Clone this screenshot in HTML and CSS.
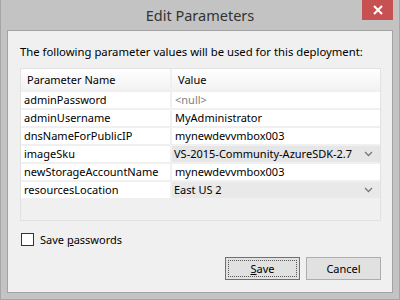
FILE: index.html
```html
<!DOCTYPE html>
<html lang="en">
<head>
    <meta charset="UTF-8">
    <title>Edit Parameters</title>
    <link rel="stylesheet" href="styles.css">
</head>
<body>
    <div class="window">
        <div class="titlebar">
            <div class="title">Edit Parameters</div>
            <button class="close-button">
                <svg width="10" height="10" viewBox="0 0 10 10"><path d="M1 1L9 9M9 1L1 9" stroke="#fff" stroke-width="2"/></svg>
            </button>
        </div>
        <div class="client">
            <p class="intro">The following parameter values will be used for this deployment:</p>
            <div class="grid">
                <div class="head">Parameter Name</div>
                <div class="head">Value</div>

                <div class="cell">adminPassword</div>
                <div class="cell null">&lt;null&gt;</div>

                <div class="cell">adminUsername</div>
                <div class="cell">MyAdministrator</div>

                <div class="cell">dnsNameForPublicIP</div>
                <div class="cell">mynewdevvmbox003</div>

                <div class="cell">imageSku</div>
                <div class="cell combo">
                    <span class="combo-text">VS-2015-Community-AzureSDK-2.7</span>
                    <svg class="chevron" width="9" height="6" viewBox="0 0 9 6"><path d="M1 1L4.5 4.5L8 1" fill="none" stroke="#777" stroke-width="1.3"/></svg>
                </div>

                <div class="cell">newStorageAccountName</div>
                <div class="cell">mynewdevvmbox003</div>

                <div class="cell">resourcesLocation</div>
                <div class="cell combo plain">
                    <span class="combo-text">East US 2</span>
                    <svg class="chevron" width="9" height="6" viewBox="0 0 9 6"><path d="M1 1L4.5 4.5L8 1" fill="none" stroke="#777" stroke-width="1.3"/></svg>
                </div>
            </div>
            <label class="save-row">
                <span class="checkbox"></span>
                <span>Save <u>p</u>asswords</span>
            </label>
            <div class="buttons">
                <button class="btn default"><span class="focus"><u>S</u>ave</span></button>
                <button class="btn">Cancel</button>
            </div>
        </div>
    </div>
</body>
</html>
```

FILE: styles.css
```css
body {
    margin: 0;
    font-family: "Noto Sans", "Open Sans", sans-serif;
    font-size: 11px;
    color: #000;
}
.window {
    width: 400px;
    height: 300px;
    box-sizing: border-box;
    background: #c3c3c3;
    border: 1px solid #a6a6a6;
    border-top: none;
    display: flex;
    flex-direction: column;
}
.titlebar {
    height: 30px;
    display: flex;
    align-items: flex-start;
}
.title {
    flex: 1;
    padding-left: 37px;
    text-align: center;
    font-size: 14.5px;
    line-height: 30px;
    color: #333;
}
.close-button {
    width: 31px;
    height: 20px;
    margin-right: 6px;
    border: none;
    padding: 0;
    background: #c75050;
    display: flex;
    justify-content: center;
    align-items: center;
}
.client {
    flex: 1;
    margin: 0 6px 6px 6px;
    border: 1px solid #a3a3a3;
    background: #f0f0f0;
    padding: 0 11px 0 12px;
    display: flex;
    flex-direction: column;
}
.intro {
    margin: 13px 0 0 0;
    line-height: 16px;
    font-size: 11.3px;
}
.grid {
    margin-top: 8px;
    height: 153px;
    box-sizing: border-box;
    border: 1px solid #e2e2e2;
    background: #f0f0f0;
    display: grid;
    grid-template-columns: 149px 1fr;
    grid-template-rows: 21px;
    grid-auto-rows: 16px;
    column-gap: 2px;
    row-gap: 2px;
    align-content: start;
}
.head {
    background: linear-gradient(#fff, #f2f2f2);
    padding-left: 6px;
    line-height: 21px;
}
.cell {
    background: #fff;
    padding-left: 3px;
    line-height: 16px;
    white-space: nowrap;
    overflow: hidden;
}
.null {
    color: #808080;
}
.combo {
    background: #e6e6e6;
    display: flex;
    align-items: center;
    padding-left: 2px;
    padding-right: 7px;
}
.combo.plain {
    background: #e9e9e9;
}
.combo-text {
    flex: 1;
    overflow: hidden;
    white-space: nowrap;
    margin-right: 10px;
}
.chevron {
    flex: none;
}
.save-row {
    display: flex;
    align-items: center;
    height: 13px;
    margin-top: 12px;
    gap: 6px;
}
.checkbox {
    width: 11px;
    height: 11px;
    border: 1px solid #333;
    background: #fff;
    margin-left: 1px;
}
.buttons {
    display: flex;
    justify-content: flex-end;
    gap: 6px;
    margin-top: 11px;
}
.btn {
    width: 75px;
    height: 23px;
    box-sizing: border-box;
    border: 1px solid #adadad;
    background: #e1e1e1;
    font-family: inherit;
    font-size: 11px;
    color: #000;
    padding: 0;
}
.btn.default {
    border-color: #707070;
    padding: 2px;
}
.focus {
    display: block;
    height: 100%;
    border: 1px dotted #555;
    box-sizing: border-box;
    line-height: 15px;
}
```
